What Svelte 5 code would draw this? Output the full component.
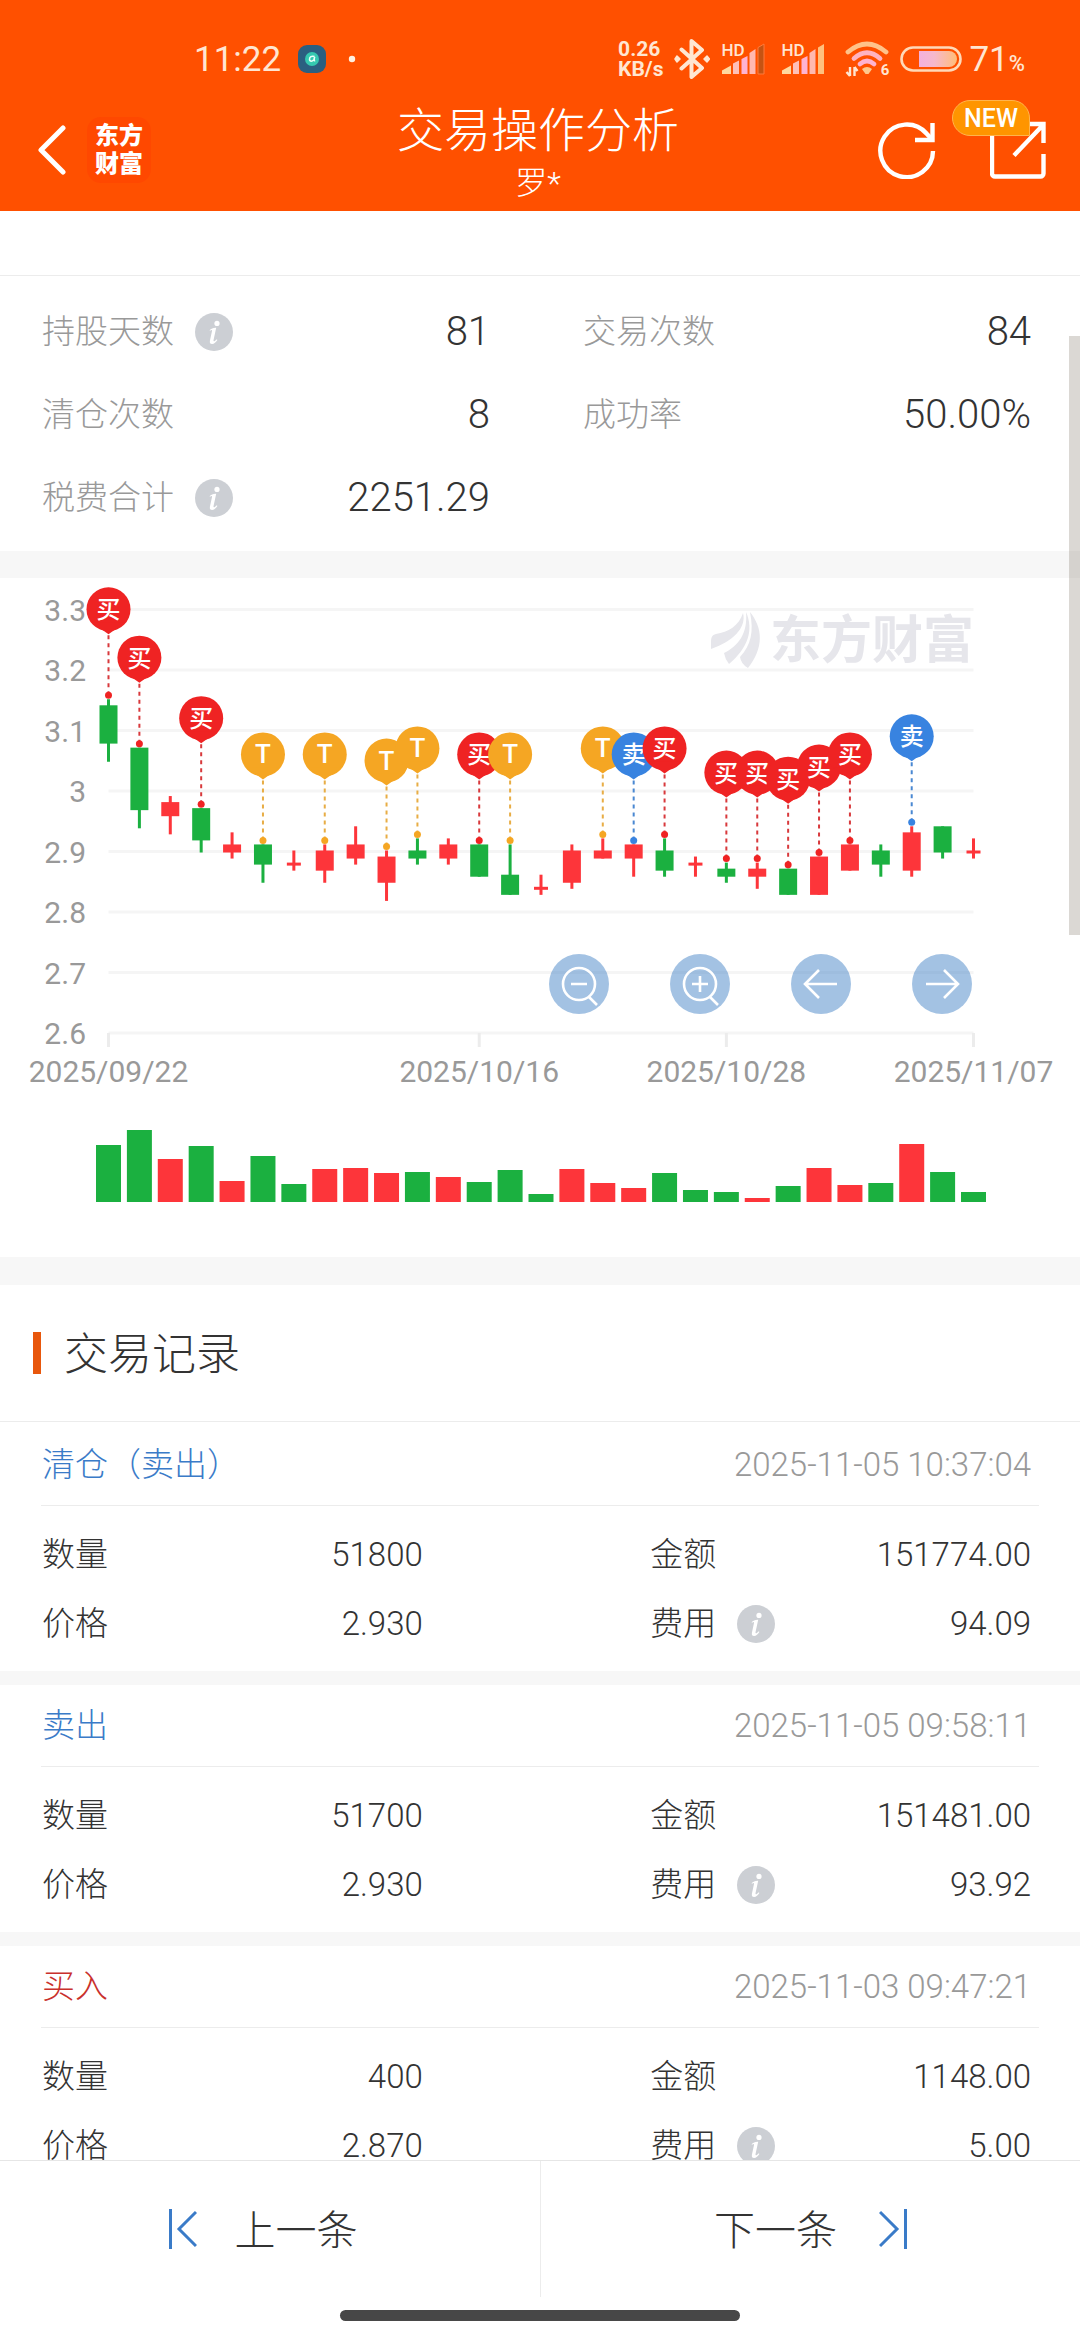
<script>
  const stats = [
    { label: '持股天数', value: '81', info: true },
    { label: '交易次数', value: '84' },
    { label: '清仓次数', value: '8' },
    { label: '成功率', value: '50.00%' },
    { label: '税费合计', value: '2251.29', info: true }
  ];

  // [body top, body bottom, high, low, colour, volume, volume colour]
  const days = [
    [3.14, 3.08, 3.15, 3.05, 'g', 57, 'g'],
    [3.07, 2.97, 3.07, 2.94, 'g', 72, 'g'],
    [2.98, 2.96, 2.99, 2.93, 'r', 43, 'r'],
    [2.97, 2.92, 2.97, 2.9, 'g', 56, 'g'],
    [2.91, 2.9, 2.93, 2.89, 'r', 21, 'r'],
    [2.91, 2.88, 2.91, 2.85, 'g', 46, 'g'],
    [2.88, 2.88, 2.9, 2.87, 'r', 18, 'g'],
    [2.9, 2.87, 2.91, 2.85, 'r', 33, 'r'],
    [2.91, 2.89, 2.94, 2.88, 'r', 34, 'r'],
    [2.89, 2.85, 2.9, 2.82, 'r', 29, 'r'],
    [2.9, 2.89, 2.92, 2.88, 'g', 30, 'g'],
    [2.91, 2.89, 2.92, 2.88, 'r', 25, 'r'],
    [2.91, 2.86, 2.91, 2.86, 'g', 20, 'g'],
    [2.86, 2.83, 2.91, 2.83, 'g', 32, 'g'],
    [2.84, 2.84, 2.86, 2.83, 'r', 8, 'g'],
    [2.9, 2.85, 2.91, 2.84, 'r', 33, 'r'],
    [2.9, 2.89, 2.92, 2.89, 'r', 19, 'r'],
    [2.91, 2.89, 2.91, 2.86, 'r', 14, 'r'],
    [2.9, 2.87, 2.92, 2.86, 'g', 29, 'g'],
    [2.88, 2.88, 2.89, 2.86, 'r', 12, 'g'],
    [2.87, 2.86, 2.88, 2.85, 'g', 10, 'g'],
    [2.87, 2.86, 2.88, 2.84, 'r', 4, 'r'],
    [2.87, 2.83, 2.87, 2.83, 'g', 16, 'g'],
    [2.89, 2.83, 2.89, 2.83, 'r', 34, 'r'],
    [2.91, 2.87, 2.91, 2.87, 'r', 17, 'r'],
    [2.9, 2.88, 2.91, 2.86, 'g', 19, 'g'],
    [2.93, 2.87, 2.94, 2.86, 'r', 58, 'r'],
    [2.94, 2.9, 2.94, 2.89, 'g', 30, 'g'],
    [2.9, 2.9, 2.92, 2.89, 'r', 10, 'g']
  ];

  const pins = [
    [0, '买'], [1, '买'], [3, '买'], [5, 'T'], [7, 'T'], [9, 'T'], [10, 'T'],
    [12, '买'], [13, 'T'], [16, 'T'], [17, '卖'], [18, '买'], [20, '买'],
    [21, '买'], [22, '买'], [23, '买'], [24, '买'], [26, '卖']
  ];
  const pinKind = { 买: 'buy', 卖: 'sell', T: 'both' };

  const prices = [3.3, 3.2, 3.1, 3, 2.9, 2.8, 2.7, 2.6];
  const dates = [
    [0, '2025/09/22'], [12, '2025/10/16'], [20, '2025/10/28'], [28, '2025/11/07']
  ];

  const left = 108.5;
  const step = 865 / 28;
  const X = (i) => left + i * step;
  const Y = (v) => 31.5 + (3.3 - v) * 605;
  const dotY = (i) => Y(days[i][2]) - 5;

  const records = [
    { kind: '清仓（卖出）', side: 'sold', time: '2025-11-05 10:37:04', qty: '51800', price: '2.930', amount: '151774.00', fee: '94.09' },
    { kind: '卖出', side: 'sold', time: '2025-11-05 09:58:11', qty: '51700', price: '2.930', amount: '151481.00', fee: '93.92' },
    { kind: '买入', side: 'bought', time: '2025-11-03 09:47:21', qty: '400', price: '2.870', amount: '1148.00', fee: '5.00' }
  ];
</script>

{#snippet infoButton(name)}
  <button class="info" aria-label={name + '说明'}>
    <svg viewBox="0 0 38 38" width="38" height="38">
      <circle cx="19" cy="19" r="19" fill="#cccfd4" />
      <circle cx="22" cy="10.4" r="2.6" fill="#fff" />
      <path d="M14.6 17.2c1.4-1.5 3.8-2.6 6.6-2.4l-2.7 12.4c-.2 1.1.5 1.3 1.3.7l2-1.6.6.7c-1.4 2-3.3 4-5.3 4-1.8 0-2.6-1.2-2.2-3.3l2.1-9.6c.3-1.4-.5-1.3-2-.3z" fill="#fff" />
    </svg>
  </button>
{/snippet}

{#snippet signal(full)}
  <div class="signal">
    <span>HD</span>
    <svg viewBox="0 0 44 32" width="44" height="32">
      <path d="M1 31v-3.5l9-5V31z" fill="#ffd9a0" />
      <path d="M12 31V20.5l6-3V31z" fill="#ffc0b8" />
      <path d="M20.5 31V16l6-3V31z" fill="#ffb3d2" />
      <path d="M28.5 31V10l6-4V31z" fill="#ffb9b0" />
      <path d="M37 31V4.5l6-3.5V31z" fill={full ? '#ffc07e' : '#c65312'} stroke={full ? 'none' : '#ff7b3a'} />
    </svg>
  </div>
{/snippet}

<div class="screen">
  <header>
    <div class="status">
      <span class="time">11:22</span>
      <svg viewBox="0 0 30 30" width="30" height="30">
        <rect x="1" y="1" width="28" height="28" rx="9" fill="#2b5f80" />
        <circle cx="15" cy="15" r="7" fill="#35c9b0" />
        <path d="M17.5 12.5c-3-1-5 .5-5 2.8 0 2.5 3.5 2.5 4.5 0l.7-2.6c-.6 2-.8 4.3.5 4.3" fill="none" stroke="#eafff8" stroke-width="1.5" />
      </svg>
      <svg class="more" viewBox="0 0 8 8" width="8" height="8"><circle cx="4" cy="4" r="3.2" fill="#fff0e0" /></svg>
      <div class="system">
        <div class="speed"><span>0.26</span><span>KB/s</span></div>
        <svg viewBox="0 0 36 40" width="36" height="40" fill="none" stroke="#ffe6d2" stroke-width="4" stroke-linejoin="round" stroke-linecap="round">
          <path d="M7.5 10.5 28 29l-10.500 9V2L28 11 7.5 29.5" />
          <path d="M3 17l3 3-3 3-2-3zM33 17l2.500 3-2.500 3-3-3z" fill="#ffe6d2" stroke-width="1.5" />
        </svg>
        {@render signal(false)}
        {@render signal(true)}
        <div class="wifi">
          <svg viewBox="0 0 44 36" width="44" height="36">
            <g fill="none" stroke-linecap="round" stroke-width="4.8">
              <path d="M3 11Q22-5 41 11" stroke="#ffc38a" />
              <path d="M9 17.500Q22 6 35 17.500" stroke="#ffb3c0" />
              <path d="M15 23Q22 17 29 23" stroke="#ffb3d0" />
            </g>
            <path d="M17 28q5-4 10 0l-3.500 5h-3z" fill="#ffc88c" />
            <path d="M5 26v9M5 35l-3.500-4M9.500 35v-9M9.500 26l3 4" fill="none" stroke="#ffe6d2" stroke-width="2.4" />
          </svg>
          <span>6</span>
        </div>
        <svg viewBox="0 0 62 26" width="62" height="26">
          <defs>
            <linearGradient id="charge"><stop offset="0" stop-color="#f4b0dc" /><stop offset=".4" stop-color="#f6b8cc" /><stop offset="1" stop-color="#ffbe78" /></linearGradient>
          </defs>
          <rect x="1.500" y="1.500" width="59" height="23" rx="11.500" fill="none" stroke="#ffd9b8" stroke-width="2.6" />
          <path d="M19 5h30a8 8 0 0 1 0 16H19z" fill="url(#charge)" />
        </svg>
        <span class="level">71<small>%</small></span>
      </div>
    </div>

    <div class="titlebar">
      <div class="start">
        <button class="back" aria-label="返回">
          <svg viewBox="0 0 28 50" width="28" height="50" fill="none" stroke="#fff" stroke-width="5" stroke-linecap="round" stroke-linejoin="round"><path d="M25 3 3 25l22 22" /></svg>
        </button>
        <a class="brand" href="#home"><span>东方</span><span>财富</span></a>
      </div>
      <div class="heading">
        <h1>交易操作分析</h1>
        <p>罗*</p>
      </div>
      <div class="end">
        <button aria-label="刷新">
          <svg viewBox="0 0 58 58" width="58" height="58" fill="none" stroke="#fff" stroke-width="4.4"><path d="M55 30a26.300 26.300 0 1 1-6.500-17.500L54.500 19" /><path d="M54.500 2v17H37" /></svg>
        </button>
        <button class="share" aria-label="分享">
          <svg viewBox="0 0 56 58" width="56" height="58" fill="none" stroke="#fff" stroke-width="4.4"><path d="M53.500 33v19.500a3 3 0 0 1-3 3H5a3 3 0 0 1-3-3V10M53.500 22V3H36M53 4 24 34.500" /></svg>
          <span class="badge">NEW</span>
        </button>
      </div>
    </div>
  </header>

  <div class="viewport">
    <main>
      <div class="spacer"></div>
      <dl class="stats">
        {#each stats as s}
          <div class="pair">
            <dt><span>{s.label}</span>{#if s.info}{@render infoButton(s.label)}{/if}</dt>
            <dd>{s.value}</dd>
          </div>
        {/each}
      </dl>

      <section class="chart" aria-label="价格走势">
        <svg class="plot" viewBox="0 0 1080 679">
          {#each prices as p}
            <line x1={left} x2="973.5" y1={Y(p)} y2={Y(p)} stroke="#f5f5f5" stroke-width="3" />
            <text class="axis" x="86" y={Y(p) + 11} text-anchor="end">{p}</text>
          {/each}
          {#each dates as [i, d]}
            <line x1={X(i)} x2={X(i)} y1="455" y2="469" stroke="#ececec" stroke-width="3" />
            <text class="axis" x={X(i)} y="504" text-anchor="middle">{d}</text>
          {/each}

          <g fill="#e6e6eb">
            <path d="M711 65C711 59 712 57 716 56C728 54 739 48 743 35C747 50 732 64 711 71Z" />
            <path d="M724 75C738 68 748 56 746 34C754 52 748 70 729 86Q725 81 724 75Z" />
            <path d="M740 79C751 67 754 54 750 34C763 50 764 70 748 90Q741 86 740 79Z" />
            <text class="watermark" x="770" y="80">东方财富</text>
          </g>

          {#each days as [top, bottom, high, low, color, volume, volumeColor], i}
            <g class={color}>
              <rect x={X(i) - 1.5} y={Y(high) - 1} width="3" height={Y(low) - Y(high) + 2} />
              {#if top === bottom}
                <rect x={X(i) - 7} y={Y(top) - 1} width="14" height="3" />
              {:else}
                <rect x={X(i) - 9} y={Y(top) - 1} width="18" height={Y(bottom) - Y(top) + 2} />
              {/if}
            </g>
            <rect class={volumeColor} x={X(i) - 12.5} y={624 - volume} width="25" height={volume} />
          {/each}

          {#each pins as [i, mark]}
            {@const y = dotY(i)}
            <g class={'pin ' + pinKind[mark]}>
              <line x1={X(i)} x2={X(i)} y1={y} y2={y - 62} stroke-width="2" stroke-dasharray="4 4" />
              <circle cx={X(i)} cy={y} r="3.5" />
              <circle cx={X(i)} cy={y - 86} r="22" />
              <path d="M{X(i) - 17} {y - 73}Q{X(i) - 7} {y - 66} {X(i)} {y - 61}Q{X(i) + 7} {y - 66} {X(i) + 17} {y - 73}z" />
              <text x={X(i)} y={y - 77} text-anchor="middle">{mark}</text>
            </g>
          {/each}
        </svg>
        <div class="tools">
          <button aria-label="缩小"><svg viewBox="0 0 60 60"><circle cx="30" cy="30" r="16" /><path d="M22 30h16M40 43l8 8" /></svg></button>
          <button aria-label="放大"><svg viewBox="0 0 60 60"><circle cx="30" cy="30" r="16" /><path d="M22 30h16M30 22v16M40 43l8 8" /></svg></button>
          <button aria-label="向前"><svg viewBox="0 0 60 60"><path d="M46 30H14M28 16 14 30l14 14" /></svg></button>
          <button aria-label="向后"><svg viewBox="0 0 60 60"><path d="M14 30h32M32 16l14 14-14 14" /></svg></button>
        </div>
      </section>

      <h2><span>交易记录</span></h2>

      {#each records as r}
        <article>
          <div class="head">
            <h3 class={r.side}>{r.kind}</h3>
            <time>{r.time}</time>
          </div>
          <dl>
            <div class="pair"><dt><span>数量</span></dt><dd>{r.qty}</dd></div>
            <div class="pair"><dt><span>金额</span></dt><dd>{r.amount}</dd></div>
            <div class="pair"><dt><span>价格</span></dt><dd>{r.price}</dd></div>
            <div class="pair"><dt><span>费用</span>{@render infoButton('费用')}</dt><dd>{r.fee}</dd></div>
          </dl>
        </article>
      {/each}
    </main>
    <div class="thumb"></div>
  </div>

  <nav>
    <button>
      <svg viewBox="0 0 28 40" width="28" height="40"><path d="M1.500 0v40M27 3 10 20l17 17" /></svg>
      <span>上一条</span>
    </button>
    <button>
      <span>下一条</span>
      <svg viewBox="0 0 28 40" width="28" height="40"><path d="M26.500 0v40M1 3l17 17L1 37" /></svg>
    </button>
  </nav>
  <div class="gesture"><span></span></div>
</div>

<style>
  :global(body) {
    background: #fff;
  }
  .screen {
    height: 100vh;
    display: flex;
    flex-direction: column;
    background: #fff;
    color: #333;
    font-family: Roboto, 'Noto Sans CJK SC', sans-serif;
    font-weight: 300;
    font-size: 33px;
  }
  h1, h2, h3, p, dl, dd, dt {
    margin: 0;
    font-weight: 300;
  }
  button {
    font: inherit;
    color: inherit;
    background: none;
    border: 0;
    padding: 0;
  }
  svg {
    display: block;
    flex: none;
  }

  header {
    background: #ff5000;
    color: #fff;
  }
  .status {
    height: 88px;
    box-sizing: border-box;
    padding: 30px 55px 0 194px;
    display: flex;
    align-items: center;
    color: #ffe6d2;
  }
  .time, .level {
    font-size: 35px;
    font-weight: 400;
  }
  .time {
    margin-right: 16px;
  }
  .more {
    margin-left: 21px;
  }
  .system {
    margin-left: auto;
    display: flex;
    align-items: center;
    gap: 11px;
  }
  .speed {
    display: flex;
    flex-direction: column;
    font-size: 21px;
    line-height: 20px;
    font-weight: 700;
  }
  .signal, .wifi {
    position: relative;
  }
  .signal {
    margin-right: 5px;
  }
  .signal span {
    position: absolute;
    left: 0;
    top: 0;
    font-size: 17px;
    line-height: 14px;
    font-weight: 500;
  }
  .wifi {
    margin-left: 4px;
  }
  .wifi span {
    position: absolute;
    right: 0;
    bottom: 0;
    font-size: 15px;
    line-height: 13px;
    font-weight: 700;
  }
  .level {
    margin-left: -4px;
  }
  .level small {
    font-size: 22px;
    font-weight: 500;
  }
  .titlebar {
    height: 123px;
    padding: 0 34px 0 38px;
    display: grid;
    grid-template-columns: 1fr auto 1fr;
    align-items: center;
  }
  .start, .end {
    display: flex;
    align-items: center;
  }
  .start {
    gap: 21px;
  }
  .end {
    justify-content: flex-end;
    gap: 54px;
  }
  .brand {
    width: 64px;
    height: 66px;
    border-radius: 14px;
    background: #ff4800;
    color: #fff;
    text-decoration: none;
    font-size: 24px;
    line-height: 28px;
    font-weight: 900;
    display: flex;
    flex-direction: column;
    align-items: center;
    justify-content: center;
  }
  .heading {
    padding-right: 8px;
    text-align: center;
  }
  h1 {
    font-size: 47px;
    line-height: 67px;
  }
  .heading p {
    font-size: 32px;
    line-height: 39px;
  }
  .share {
    position: relative;
  }
  .badge {
    position: absolute;
    right: 16px;
    top: -21px;
    width: 76px;
    height: 34px;
    border: 1px solid #ffb44d;
    border-radius: 18px 18px 0 18px;
    background: #ff9500;
    font-size: 25px;
    line-height: 35px;
    font-weight: 500;
    text-align: center;
  }

  .viewport {
    flex: 1;
    min-height: 0;
    position: relative;
  }
  main {
    height: 100%;
    overflow-y: auto;
    scrollbar-width: none;
  }
  .thumb {
    position: absolute;
    right: 0;
    top: 125px;
    width: 11px;
    height: 599px;
    background: rgba(100, 85, 70, 0.23);
  }
  .spacer {
    height: 64px;
    border-bottom: 1px solid #ececec;
  }
  .pair {
    display: flex;
    align-items: center;
    justify-content: space-between;
  }
  dt {
    display: flex;
    align-items: center;
    gap: 21px;
  }
  dt span, h2 span, h3, nav span {
    padding-bottom: 5px;
  }
  .stats {
    padding: 14px 49px 12px 42px;
    display: grid;
    grid-template-columns: 1fr 1fr;
    grid-auto-rows: 83px;
    column-gap: 93px;
    border-bottom: 27px solid #f7f7f7;
  }
  .stats dt {
    color: #999;
  }
  .stats dd {
    font-size: 40px;
  }

  .chart {
    position: relative;
    border-bottom: 28px solid #f7f7f7;
  }
  .plot {
    width: 100%;
    height: auto;
  }
  .axis {
    font-size: 30px;
    font-weight: 400;
    fill: #999;
  }
  .watermark {
    font-size: 51px;
    font-weight: 700;
  }
  .g {
    fill: #1bb040;
  }
  .r {
    fill: #fd353a;
  }
  .buy {
    fill: #ef2323;
    stroke: #d8393c;
  }
  .sell {
    fill: #3883e0;
    stroke: #4a88d2;
  }
  .both {
    fill: #f5a623;
    stroke: #e8ad45;
  }
  .pin circle, .pin path, .pin text {
    stroke: none;
  }
  .pin text {
    fill: #fff;
    font-size: 24px;
    font-weight: 500;
  }
  .both text {
    font-size: 26px;
  }
  .tools {
    position: absolute;
    right: 10%;
    top: 55.4%;
    width: 39.2%;
    display: flex;
    justify-content: space-between;
  }
  .tools button {
    width: 60px;
    height: 60px;
    border-radius: 50%;
    background: rgba(60, 125, 195, 0.47);
  }
  .tools svg {
    fill: none;
    stroke: #fff;
    stroke-width: 2.6;
  }

  h2 {
    height: 136px;
    padding-left: 33px;
    display: flex;
    align-items: center;
    gap: 23px;
    font-size: 44px;
    border-bottom: 1px solid #ececec;
    margin-bottom: 2px;
  }
  h2::before {
    content: '';
    width: 8px;
    height: 42px;
    background: #e8570c;
  }
  article {
    border-bottom: 14px solid #f7f7f7;
  }
  .head {
    height: 81px;
    margin: 0 41px;
    padding: 0 8px 0 1px;
    display: flex;
    align-items: center;
    justify-content: space-between;
    border-bottom: 1px solid #ececec;
  }
  h3 {
    font-size: 33px;
  }
  .sold {
    color: #3a7bc8;
  }
  .bought {
    color: #c9302c;
  }
  time {
    color: #999;
  }
  article dl {
    padding: 14px 49px 13px 42px;
    display: grid;
    grid-template-columns: 1fr 1fr;
    grid-auto-rows: 69px;
    column-gap: 23%;
  }

  nav {
    display: grid;
    grid-template-columns: 1fr 1fr;
    height: 136px;
    border-top: 1px solid #e6e6e6;
  }
  nav button {
    display: flex;
    align-items: center;
    justify-content: center;
    gap: 38px;
    font-size: 41px;
  }
  nav button:first-child {
    padding-right: 14px;
  }
  nav button:last-child {
    gap: 42px;
    border-left: 1px solid #ececec;
  }
  nav svg {
    fill: none;
    stroke: #3a7bc8;
    stroke-width: 3;
  }
  .gesture {
    height: 43px;
    display: flex;
    justify-content: center;
    align-items: center;
  }
  .gesture span {
    width: 37%;
    height: 11px;
    margin-bottom: 6px;
    border-radius: 6px;
    background: #474747;
  }
</style>
